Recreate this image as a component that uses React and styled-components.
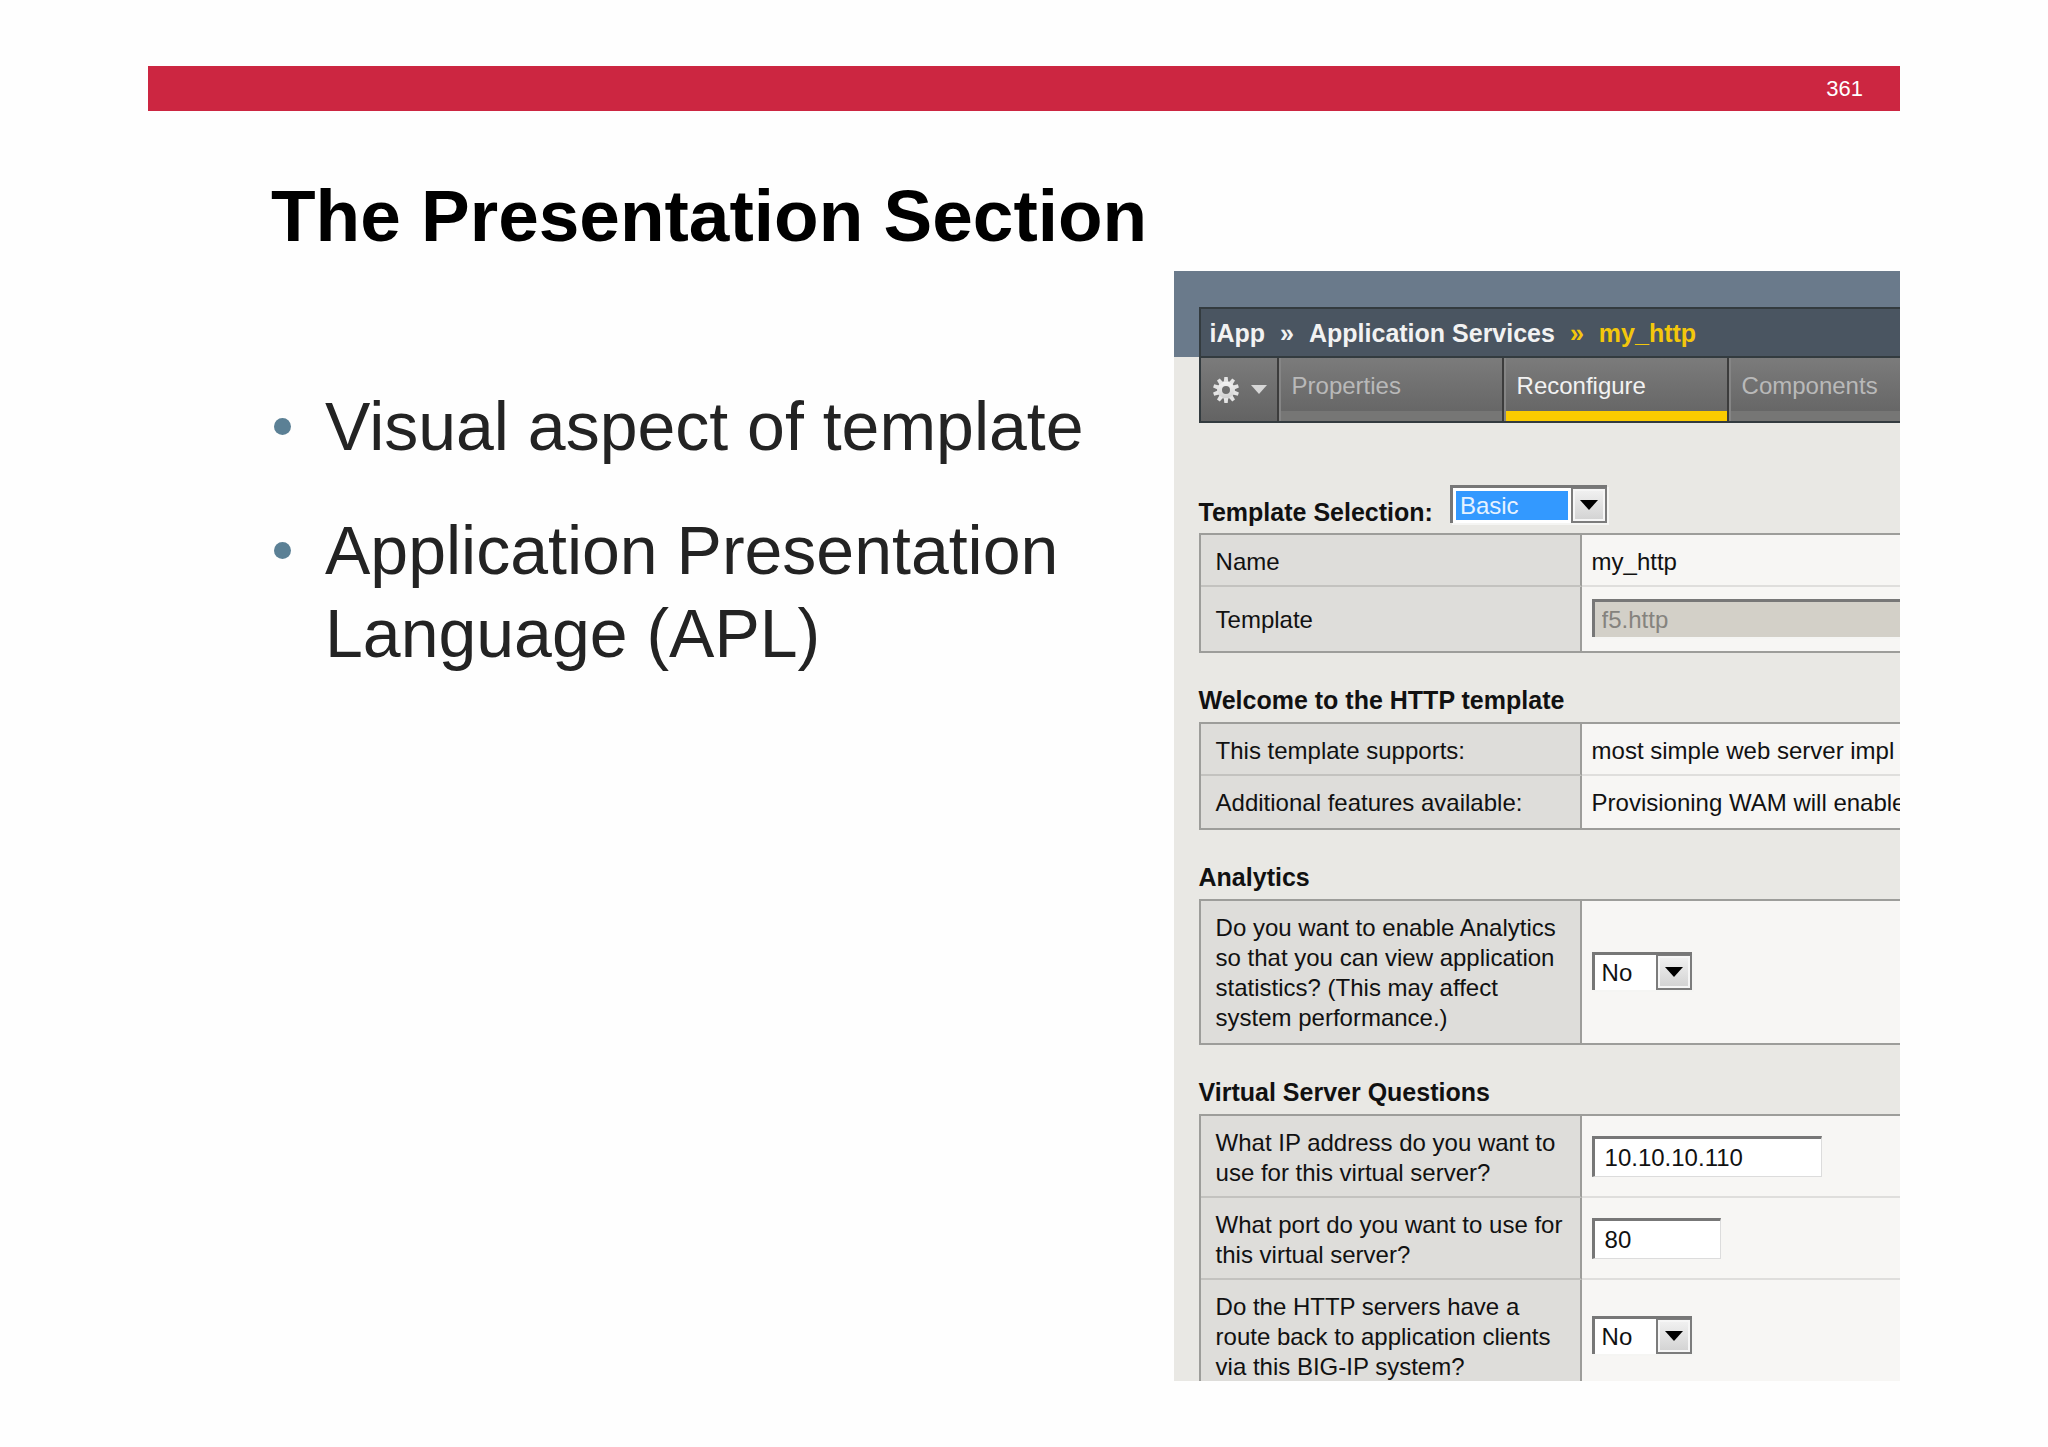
import React from 'react'
import styled, { createGlobalStyle } from 'styled-components'

const sections = [
    {
        title: 'Welcome to the HTTP template',
        rows: [
            { label: 'This template supports:', text: 'most simple web server impl' },
            { label: 'Additional features available:', text: 'Provisioning WAM will enable' },
        ],
    },
    {
        title: 'Analytics',
        rows: [
            {
                id: 'analytics',
                label: 'Do you want to enable Analytics so that you can view application statistics? (This may affect system performance.)',
                select: 'No',
            },
        ],
    },
    {
        title: 'Virtual Server Questions',
        rows: [
            { id: 'address', label: 'What IP address do you want to use for this virtual server?', input: '10.10.10.110', width: '230px' },
            { id: 'port', label: 'What port do you want to use for this virtual server?', input: '80', width: '129px' },
            { id: 'route', label: 'Do the HTTP servers have a route back to application clients via this BIG-IP system?', select: 'No' },
        ],
    },
]

const teeth = [0, 36, 72, 108, 144, 180, 216, 252, 288, 324]

function GearIcon() {
    return (
        <svg width="28" height="28" viewBox="-14 -14 28 28" aria-hidden="true">
            <defs>
                <linearGradient id="gear" gradientUnits="userSpaceOnUse" x1="0" y1="-13" x2="0" y2="13">
                    <stop offset="0" stopColor="#ffffff" />
                    <stop offset="1" stopColor="#c4c4c4" />
                </linearGradient>
            </defs>
            <circle r="6.5" fill="none" stroke="url(#gear)" strokeWidth="5" />
            {teeth.map((angle) => (
                <path key={angle} d="M-2.2 -8 L-1.7 -13 H1.7 L2.2 -8 Z" fill="#e4e4e4" transform={`rotate(${angle})`} />
            ))}
        </svg>
    )
}

function DropDown({ id, value, width, highlighted, disabled, wide }) {
    return (
        <SelectBox $width={width} $disabled={disabled}>
            <Select id={id} defaultValue={value} disabled={disabled} $highlighted={highlighted}>
                <option>{value}</option>
            </Select>
            {!wide && (
                <Arrow>
                    <svg width="18" height="10" viewBox="0 0 18 10" aria-hidden="true">
                        <path d="M0 0H18L9 10Z" fill="#000" />
                    </svg>
                </Arrow>
            )}
        </SelectBox>
    )
}

function Row({ row }) {
    return (
        <tr>
            <LabelCell scope="row">
                {row.id ? <label htmlFor={row.id}>{row.label}</label> : row.label}
            </LabelCell>
            <ValueCell>
                {row.text}
                {row.select && <DropDown id={row.id} value={row.select} width="100px" />}
                {row.input && <TextBox id={row.id} type="text" defaultValue={row.input} $width={row.width} />}
            </ValueCell>
        </tr>
    )
}

function App() {
    return (
        <Slide>
            <GlobalStyle />
            <TopBar>361</TopBar>
            <Body>
                <Notes>
                    <Title>The Presentation Section</Title>
                    <Bullets>
                        <Bullet>Visual aspect of template</Bullet>
                        <Bullet>Application Presentation Language (APL)</Bullet>
                    </Bullets>
                </Notes>
                <Console>
                    <Header>
                        <Breadcrumb>
                            <Crumb href="#iapp">iApp</Crumb>
                            <span>»</span>
                            <Crumb href="#services">Application Services</Crumb>
                            <Current>»</Current>
                            <Current>my_http</Current>
                        </Breadcrumb>
                        <Tabs>
                            <GearButton type="button" aria-label="Options">
                                <GearIcon />
                                <svg width="16" height="9" viewBox="0 0 16 9" aria-hidden="true">
                                    <path d="M0 0H16L8 9Z" fill="#d6d6d6" />
                                </svg>
                            </GearButton>
                            <Tab type="button">Properties</Tab>
                            <Tab type="button" $active>Reconfigure</Tab>
                            <Tab type="button">Components</Tab>
                        </Tabs>
                    </Header>
                    <Form>
                        <SelectionRow>
                            <label htmlFor="selection">Template Selection:</label>
                            <DropDown id="selection" value="Basic" width="157px" highlighted />
                        </SelectionRow>
                        <Table>
                            <tbody>
                                <Row row={{ label: 'Name', text: 'my_http' }} />
                                <tr>
                                    <LabelCell scope="row"><label htmlFor="template">Template</label></LabelCell>
                                    <ValueCell>
                                        <DropDown id="template" value="f5.http" width="100%" disabled wide />
                                    </ValueCell>
                                </tr>
                            </tbody>
                        </Table>
                        {sections.map((section) => (
                            <section key={section.title}>
                                <SectionTitle>{section.title}</SectionTitle>
                                <Table>
                                    <tbody>
                                        {section.rows.map((row) => <Row key={row.label} row={row} />)}
                                    </tbody>
                                </Table>
                            </section>
                        ))}
                    </Form>
                </Console>
            </Body>
        </Slide>
    )
}

const GlobalStyle = createGlobalStyle`
  * {
    box-sizing: border-box;
  }
  body {
    margin: 0;
    background: #fefefe;
    font-family: "Liberation Sans", Arial, sans-serif;
  }
  button, input, select {
    font-family: inherit;
    font-size: 24px;
  }
`

const Slide = styled.main`
  display: flex;
  flex-direction: column;
  height: 100vh;
  padding: 66px 148px;
`

const TopBar = styled.header`
  flex: none;
  padding: 1px 37px 0 0;
  background: #cc2641;
  color: #fff;
  font-size: 22px;
  line-height: 44px;
  text-align: right;
`

const Body = styled.div`
  flex: 1;
  min-height: 0;
  display: grid;
  grid-template-columns: minmax(0, 24fr) minmax(0, 17fr);
  grid-template-rows: minmax(0, 1fr);
`

const Notes = styled.div`
  padding: 63px 0 0 123px;
`

const Title = styled.h1`
  margin: 0;
  color: #000;
  font-size: 73px;
  line-height: 84px;
  white-space: nowrap;
`

const Bullets = styled.ul`
  display: flex;
  flex-direction: column;
  gap: 41px;
  margin: 127px 0 0;
  padding: 0 0 0 3px;
  list-style: none;
`

const Bullet = styled.li`
  display: flex;
  gap: 34px;
  color: #232323;
  font-size: 68px;
  line-height: 83px;

  &::before {
    content: "";
    flex: none;
    width: 17px;
    height: 17px;
    margin-top: 33px;
    border-radius: 50%;
    background: #5b8095;
  }
`

const Console = styled.div`
  margin-top: 160px;
  padding: 36px 0 0 25px;
  overflow: hidden;
  background: linear-gradient(#6a7a8b 86px, #e9e8e4 86px);
  color: #111;
  font-size: 24px;
  line-height: 30px;
`

const Header = styled.div`
  border: 2px solid #333b3f;
  border-right: none;
`

const Breadcrumb = styled.nav`
  display: flex;
  align-items: center;
  gap: 15px;
  height: 49px;
  padding-left: 9px;
  border-bottom: 2px solid #333b3f;
  background: #4a5561;
  color: #f2f2f2;
  font-size: 25px;
  font-weight: bold;
  white-space: nowrap;
`

const Crumb = styled.a`
  color: inherit;
  text-decoration: none;
`

const Current = styled.span`
  color: #f3c70c;
`

const Tabs = styled.div`
  display: flex;
  height: 63px;
  overflow: hidden;
  background: linear-gradient(#7b7b7b, #636363);
`

const GearButton = styled.button`
  flex: none;
  display: flex;
  align-items: center;
  gap: 11px;
  width: 78px;
  padding: 0 0 0 11px;
  border: none;
  border-right: 2px solid #3c3c3c;
  background: none;
`

const Tab = styled.button`
  flex: none;
  width: 225px;
  padding: 0 0 7px 13px;
  border: solid #3c3c3c;
  border-width: 0 2px 0 0;
  background: linear-gradient(#7b7b7b, #636363);
  box-shadow: inset 2px 0 #858585, inset 0 -10px ${(props) => (props.$active ? '#fbcb00' : '#767675')};
  color: ${(props) => (props.$active ? '#f2f2f2' : '#b9b9b9')};
  line-height: 30px;
  text-align: left;
`

const Form = styled.form`
  padding-top: 62px;
`

const SelectionRow = styled.div`
  display: flex;
  align-items: flex-end;
  gap: 17px;
  margin-bottom: 6px;
  font-size: 25px;
  font-weight: bold;
`

const SectionTitle = styled.h2`
  margin: 32px 0 7px;
  font-size: 25px;
  line-height: 30px;
`

const Table = styled.table`
  width: 100%;
  table-layout: fixed;
  border: 2px solid #9d9d9a;
  border-right: none;
  border-spacing: 0;

  tr:last-child > * {
    padding-bottom: 10px;
    border-bottom: none;
  }
`

const LabelCell = styled.th`
  width: 381px;
  padding: 12px 8px 8px 15px;
  border-right: 2px solid #9d9d9a;
  border-bottom: 2px solid #c3c2bf;
  background: #deddda;
  font-weight: normal;
  text-align: left;
`

const ValueCell = styled.td`
  padding: 12px 0 8px 10px;
  overflow: hidden;
  border-bottom: 2px solid #dfdedc;
  background: #f7f6f4;
  white-space: nowrap;
`

const SelectBox = styled.div`
  display: grid;
  width: ${(props) => props.$width};
  height: 38px;
  margin-bottom: 4px;
  border: solid #777;
  border-width: 3px 0 0 3px;
  background: ${(props) => (props.$disabled ? '#d3d0c8' : '#fff')};
  box-shadow: 2px 2px #f5f5f3;
`

const Select = styled.select`
  grid-area: 1 / 1;
  appearance: none;
  min-width: 0;
  padding: 0 0 0 7px;
  border: none;
  border-radius: 0;
  background: ${(props) =>
    props.$highlighted
      ? 'linear-gradient(#3399ff, #3399ff) 3px 3px / calc(100% - 42px) calc(100% - 6px) no-repeat'
      : 'none'};
  color: ${(props) => (props.$highlighted ? '#e6f2ff' : '#111')};

  &:disabled {
    color: #85837e;
    opacity: 1;
  }
`

const Arrow = styled.span`
  grid-area: 1 / 1;
  justify-self: end;
  display: flex;
  align-items: center;
  justify-content: center;
  width: 36px;
  border: 2px solid #7c7c7c;
  border-top-width: 1px;
  background: linear-gradient(#f2f2f2, #d2d2d2);
  box-shadow: inset 0 0 0 2px #f6f6f6;
  pointer-events: none;
`

const TextBox = styled.input`
  display: block;
  width: ${(props) => props.$width};
  height: 41px;
  margin-bottom: 4px;
  padding: 2px 0 0 10px;
  border: solid;
  border-width: 3px 1px 1px 3px;
  border-color: #777 #dcdcdc #dcdcdc #777;
  border-radius: 0;
  background: #fff;
  color: #111;
`

export default App
